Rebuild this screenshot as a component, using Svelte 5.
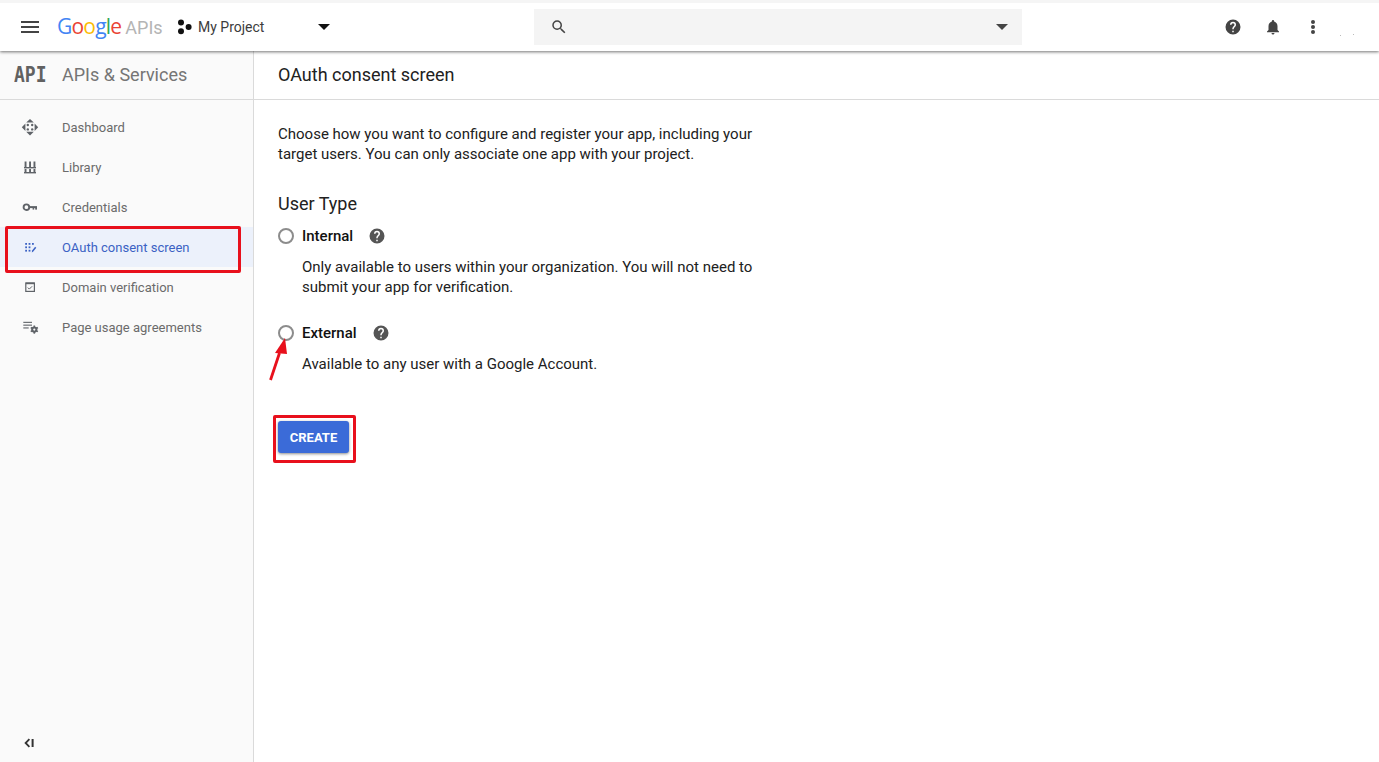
<script lang="ts">
  const navItems = [
    { label: 'Dashboard', icon: 'dashboard' },
    { label: 'Library', icon: 'library' },
    { label: 'Credentials', icon: 'key' },
    { label: 'OAuth consent screen', icon: 'oauth', active: true },
    { label: 'Domain verification', icon: 'domain' },
    { label: 'Page usage agreements', icon: 'usage' }
  ];

  const googleLetters = [
    ['G', '#4285f4'],
    ['o', '#ea4335'],
    ['o', '#fbbc05'],
    ['g', '#4285f4'],
    ['l', '#34a853'],
    ['e', '#ea4335']
  ];
</script>

<div class="page">
  <header class="topbar">
    <div class="topbar-left">
      <button class="icon-btn menu-btn" aria-label="Main menu">
        <svg width="24" height="24" viewBox="0 0 24 24"><path d="M3 18h18v-2H3v2zm0-5h18v-2H3v2zm0-7v2h18V6H3z" fill="#444" /></svg>
      </button>
      <div class="logo">
        <span class="google">{#each googleLetters as [ch, color]}<span style:color={color}>{ch}</span>{/each}</span>
        <span class="apis">APIs</span>
      </div>
      <div class="project">
        <svg width="16" height="16" viewBox="0 0 16 16"><circle cx="4" cy="3.6" r="3" fill="#111" /><circle cx="4" cy="12.2" r="3" fill="#111" /><circle cx="11.6" cy="8" r="3" fill="#111" /></svg>
        <span class="project-name">My Project</span>
        <span class="caret project-caret"></span>
      </div>
    </div>
    <div class="search">
      <svg width="18" height="18" viewBox="0 0 24 24"><path d="M15.5 14h-.79l-.28-.27A6.47 6.47 0 0 0 16 9.5 6.5 6.5 0 1 0 9.5 16c1.61 0 3.09-.59 4.23-1.57l.27.28v.79l5 4.99L20.49 19l-4.99-5zm-6 0C7.01 14 5 11.99 5 9.5S7.01 5 9.5 5 14 7.01 14 9.5 11.99 14 9.5 14z" fill="#444" /></svg>
      <span class="caret search-caret"></span>
    </div>
    <div class="topbar-right">
      <svg width="18" height="18" viewBox="0 0 24 24"><path d="M12 2a10 10 0 1 0 0 20 10 10 0 0 0 0-20zm1 17h-2v-2h2v2zm2.07-7.75-.9.92C13.45 12.9 13 13.5 13 15h-2v-.5c0-1.1.45-2.1 1.17-2.83l1.24-1.26c.37-.36.59-.86.59-1.41a2 2 0 1 0-4 0H8a4 4 0 1 1 8 0c0 .88-.36 1.68-.93 2.25z" fill="#444" /></svg>
      <svg width="18" height="18" viewBox="0 0 24 24"><path d="M12 22c1.1 0 2-.9 2-2h-4a2 2 0 0 0 2 2zm6-6v-5c0-3.07-1.64-5.64-4.5-6.32V4a1.5 1.5 0 0 0-3 0v.68C7.63 5.36 6 7.92 6 11v5l-2 2v1h16v-1l-2-2z" fill="#444" /></svg>
      <svg width="18" height="18" viewBox="0 0 18 18" fill="#444"><circle cx="9" cy="4" r="2" /><circle cx="9" cy="9" r="2" /><circle cx="9" cy="14" r="2" /></svg>
      <svg class="specks" width="18" height="18" viewBox="0 0 18 18" fill="#bbb"><rect x="1" y="17" width="1" height="1" /><rect x="14" y="16" width="1" height="1" /></svg>
    </div>
  </header>

  <div class="main">
    <aside class="sidebar">
      <div class="sidebar-head">
        <span class="api-mark">API</span>
        <span class="sidebar-title">APIs &amp; Services</span>
      </div>
      <nav class="nav">
        {#each navItems as item}
          <div class="nav-item" class:active={item.active}>
            <span class="nav-icon">
              {#if item.icon === 'dashboard'}
                <svg width="18" height="18" viewBox="0 0 18 18" fill="#5f6368"><path d="M9 1l3.8 3.6H5.2zM9 17.4l-3.8-3.6h7.6zM.8 9.2l3.6-3.8v7.6zM17.2 9.2l-3.6 3.8V5.4z" /><circle cx="6.8" cy="7" r="1.2" /><circle cx="11.2" cy="7" r="1.2" /><circle cx="6.8" cy="11.4" r="1.2" /><circle cx="11.2" cy="11.4" r="1.2" /></svg>
              {:else if item.icon === 'library'}
                <svg width="18" height="18" viewBox="0 0 18 18" fill="#5f6368"><rect x="3.6" y="3.5" width="1.9" height="5.5" /><rect x="8.1" y="3.5" width="1.9" height="5.5" /><rect x="12.5" y="3.5" width="1.9" height="5.5" /><rect x="3" y="9" width="12" height="1.4" /><rect x="3.6" y="11" width="1.9" height="3" /><rect x="8.1" y="11" width="1.9" height="3" /><rect x="12.5" y="11" width="1.9" height="3" /><rect x="3" y="14" width="12" height="1.4" /></svg>
              {:else if item.icon === 'key'}
                <svg width="18" height="18" viewBox="0 0 18 18" fill="#5f6368"><circle cx="5.4" cy="9.2" r="2.8" fill="none" stroke="#5f6368" stroke-width="1.9" /><rect x="8" y="8.1" width="8" height="2" /><rect x="11.6" y="9.6" width="1.6" height="2" /><rect x="14.2" y="9.6" width="1.8" height="2" /></svg>
              {:else if item.icon === 'oauth'}
                <svg width="18" height="18" viewBox="0 0 18 18" fill="#3b62c4"><rect x="4.2" y="5" width="1.8" height="1.8" /><rect x="7.6" y="5" width="1.8" height="1.8" /><rect x="11" y="5" width="1.8" height="1.8" /><rect x="4.2" y="8.4" width="1.8" height="1.8" /><rect x="7.6" y="8.4" width="1.8" height="1.8" /><rect x="4.2" y="11.8" width="1.8" height="1.8" /><rect x="7.6" y="11.8" width="1.8" height="1.8" /><path d="M10.8 14.4l.3-2 3-3.6 1.2 1-3 3.6z" /></svg>
              {:else if item.icon === 'domain'}
                <svg width="18" height="18" viewBox="0 0 18 18" fill="none" stroke="#5f6368"><rect x="4.8" y="5" width="8.6" height="8.4" stroke-width="1.2" /><path d="M4.8 5.4h8.6" stroke-width="1.6" /><path d="M6.8 9.6l1.5 1.5 2.8-2.8" stroke-width="1" /></svg>
              {:else}
                <svg width="18" height="18" viewBox="0 0 18 18" fill="#5f6368"><rect x="2.3" y="3.8" width="8.7" height="1.1" /><rect x="2.3" y="6.6" width="8.7" height="1.1" /><rect x="2.3" y="9.4" width="5.4" height="1.1" /><circle cx="13.3" cy="11.6" r="3.1" /><path d="M12.5 7.5h1.6v8.2h-1.6z" /><path d="M12.5 7.5h1.6v8.2h-1.6z" transform="rotate(60 13.3 11.6)" /><path d="M12.5 7.5h1.6v8.2h-1.6z" transform="rotate(120 13.3 11.6)" /><circle cx="13.3" cy="11.6" r="1.1" fill="#fafafa" /></svg>
              {/if}
            </span>
            <span class="nav-label">{item.label}</span>
          </div>
        {/each}
      </nav>
      <div class="collapse">
        <svg width="14" height="14" viewBox="0 0 14 14"><path d="M7.4 3.2L3.6 7l3.8 3.8" fill="none" stroke="#333" stroke-width="1.8" /><rect x="9.6" y="3" width="2" height="8" fill="#333" /></svg>
      </div>
    </aside>

    <main class="content">
      <div class="content-head">OAuth consent screen</div>
      <div class="content-body">
        <p class="intro">Choose how you want to configure and register your app, including your target users. You can only associate one app with your project.</p>
        <h2 class="section-title">User Type</h2>

        <div class="option internal">
          <div class="option-row">
            <span class="radio"></span>
            <span class="option-label">Internal</span>
            <svg class="help" width="18" height="18" viewBox="0 0 24 24"><path d="M12 2a10 10 0 1 0 0 20 10 10 0 0 0 0-20zm1 17h-2v-2h2v2zm2.07-7.75-.9.92C13.45 12.9 13 13.5 13 15h-2v-.5c0-1.1.45-2.1 1.17-2.83l1.24-1.26c.37-.36.59-.86.59-1.41a2 2 0 1 0-4 0H8a4 4 0 1 1 8 0c0 .88-.36 1.68-.93 2.25z" fill="#555" /></svg>
          </div>
          <p class="option-desc">Only available to users within your organization. You will not need to submit your app for verification.</p>
        </div>

        <div class="option external">
          <div class="option-row">
            <span class="radio"></span>
            <span class="option-label">External</span>
            <svg class="help" width="18" height="18" viewBox="0 0 24 24"><path d="M12 2a10 10 0 1 0 0 20 10 10 0 0 0 0-20zm1 17h-2v-2h2v2zm2.07-7.75-.9.92C13.45 12.9 13 13.5 13 15h-2v-.5c0-1.1.45-2.1 1.17-2.83l1.24-1.26c.37-.36.59-.86.59-1.41a2 2 0 1 0-4 0H8a4 4 0 1 1 8 0c0 .88-.36 1.68-.93 2.25z" fill="#555" /></svg>
          </div>
          <p class="option-desc">Available to any user with a Google Account.</p>
        </div>

        <button class="create-btn">CREATE</button>
      </div>
    </main>
  </div>

  <!-- red annotations drawn over the screenshot -->
  <div class="mark mark-nav"></div>
  <div class="mark mark-create"></div>
  <svg class="arrow" width="30" height="60" viewBox="0 0 30 60">
    <path d="M2.5 46L11.5 19" stroke="#e8101c" stroke-width="2.8" fill="none" />
    <path d="M17 4l2 16-12-1z" fill="#e8101c" />
  </svg>
</div>

<style>
  :global(body) {
    margin: 0;
    background: #fff;
  }

  .page {
    position: relative;
    width: 1379px;
    height: 762px;
    overflow: hidden;
    display: flex;
    flex-direction: column;
    font-family: Roboto, 'Liberation Sans', sans-serif;
    color: #212121;
    border-top: 3px solid #f5f5f5;
    box-sizing: border-box;
  }

  .topbar {
    height: 48px;
    padding-bottom: 1px;
    box-sizing: border-box;
    flex-shrink: 0;
    display: flex;
    align-items: center;
    background: #fff;
    box-shadow: 0 1px 3px rgba(0, 0, 0, 0.55);
    position: relative;
    z-index: 2;
  }

  .topbar-left {
    width: 534px;
    flex-shrink: 0;
    display: flex;
    align-items: center;
  }

  .icon-btn {
    background: none;
    border: none;
    padding: 0;
    display: flex;
  }

  .menu-btn {
    margin-left: 18px;
  }

  .logo {
    margin-left: 15px;
    display: flex;
    align-items: baseline;
    width: 120px;
    flex-shrink: 0;
    font-size: 21px;
    line-height: 24px;
  }

  .google {
    font-family: 'Open Sans', sans-serif;
    letter-spacing: -0.8px;
    font-weight: 500;
  }

  .apis {
    margin-left: 4px;
    color: #b4b4b4;
    font-size: 18px;
  }

  .project {
    display: flex;
    align-items: center;
    gap: 5px;
    flex: 1;
  }

  .project-name {
    font-size: 14px;
    color: #3c3c3c;
  }

  .caret {
    width: 0;
    height: 0;
    border-left: 6px solid transparent;
    border-right: 6px solid transparent;
    border-top: 6px solid #111;
  }

  .project-caret {
    margin-left: 49px;
  }

  .search {
    width: 488px;
    height: 36px;
    flex-shrink: 0;
    display: flex;
    align-items: center;
    justify-content: space-between;
    padding: 0 14px 0 16px;
    box-sizing: border-box;
    background: #f4f4f4;
    margin-top: 1px;
  }

  .search-caret {
    border-top-color: #444;
  }

  .topbar-right {
    margin-left: auto;
    margin-right: 22px;
    display: flex;
    align-items: center;
    gap: 22px;
  }

  .specks {
    margin-left: -5px;
  }

  .main {
    flex: 1;
    display: flex;
    min-height: 0;
  }

  .sidebar {
    width: 254px;
    flex-shrink: 0;
    box-sizing: border-box;
    background: #fafafa;
    border-right: 1px solid #dadada;
    display: flex;
    flex-direction: column;
  }

  .sidebar-head {
    height: 49px;
    padding-bottom: 2px;
    flex-shrink: 0;
    box-sizing: border-box;
    border-bottom: 1px solid #dadada;
    display: flex;
    align-items: center;
  }

  .api-mark {
    width: 62px;
    padding-left: 14px;
    box-sizing: border-box;
    margin-top: 2px;
    font-family: 'DejaVu Sans Mono', monospace;
    font-weight: 700;
    font-size: 18px;
    line-height: 16px;
    color: #616161;
    transform: scaleY(1.2);
  }

  .sidebar-title {
    font-size: 18px;
    color: #757575;
  }

  .nav {
    padding-top: 7px;
    flex: 1;
  }

  .nav-item {
    height: 40px;
    display: flex;
    align-items: center;
    font-size: 13px;
    color: #6b6b6b;
  }

  .nav-item.active {
    background: #ecf1fb;
    color: #3b62c4;
  }

  .nav-icon {
    width: 62px;
    padding-left: 21px;
    box-sizing: border-box;
    display: flex;
    flex-shrink: 0;
  }

  .collapse {
    height: 38px;
    padding-left: 22px;
    display: flex;
    align-items: center;
    flex-shrink: 0;
  }

  .content {
    flex: 1;
    min-width: 0;
    display: flex;
    flex-direction: column;
  }

  .content-head {
    height: 49px;
    padding: 0 0 2px 24px;
    flex-shrink: 0;
    box-sizing: border-box;
    border-bottom: 1px solid #dadada;
    display: flex;
    align-items: center;
    font-size: 18px;
    color: #212121;
  }

  .content-body {
    padding: 24px 0 0 24px;
    width: 480px;
    font-size: 15px;
    line-height: 20px;
  }

  .intro {
    margin: 0;
  }

  .section-title {
    margin: 29px 0 0;
    font-size: 18px;
    font-weight: 400;
    line-height: 22px;
  }

  .option-row {
    display: flex;
    align-items: center;
    height: 24px;
  }

  .internal {
    margin-top: 9px;
  }

  .external {
    margin-top: 24px;
  }

  .radio {
    width: 12px;
    height: 12px;
    border: 2px solid #8c8c8c;
    border-radius: 50%;
    background: #fff;
    margin-right: 8px;
    flex-shrink: 0;
  }

  .option-label {
    font-weight: 500;
    color: #111;
  }

  .help {
    margin-left: 15px;
  }

  .option-desc {
    margin: 9px 0 0 24px;
    width: 460px;
    color: #212121;
  }

  .create-btn {
    margin-top: 47px;
    width: 71px;
    height: 32px;
    display: block;
    border: none;
    border-radius: 3px;
    background: #3b6bd8;
    color: #fff;
    font: 700 13px Roboto, sans-serif;
    box-shadow: 0 1px 3px rgba(0, 0, 0, 0.45);
  }

  .mark {
    position: absolute;
    border: 3px solid #e8101c;
    border-radius: 2px;
    box-sizing: border-box;
    z-index: 3;
  }

  .mark-nav {
    left: 5px;
    top: 223px;
    width: 236px;
    height: 47px;
  }

  .mark-create {
    left: 273px;
    top: 412px;
    width: 83px;
    height: 48px;
  }

  .arrow {
    position: absolute;
    left: 268px;
    top: 331px;
    z-index: 3;
  }
</style>
